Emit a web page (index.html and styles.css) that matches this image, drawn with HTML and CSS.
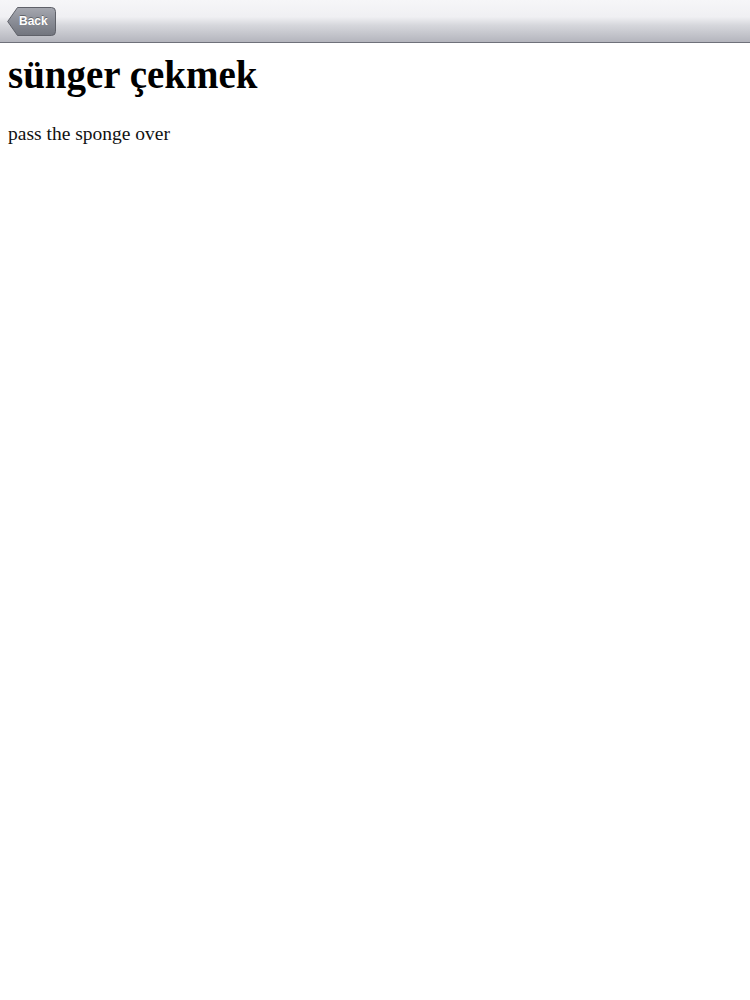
FILE: index.html
```html
<!DOCTYPE html>
<html>
<head>
<meta charset="utf-8">
<link rel="stylesheet" href="styles.css">
</head>
<body>
<div class="toolbar">
  <a class="back">
    <svg class="back-shape" width="49" height="29" viewBox="0 0 49 29">
      <defs>
        <linearGradient id="bg" x1="0" y1="0" x2="0" y2="1">
          <stop offset="0" stop-color="#a6a8b0"/>
          <stop offset="0.5" stop-color="#8a8d96"/>
          <stop offset="1" stop-color="#72757e"/>
        </linearGradient>
      </defs>
      <path d="M10.5 0.5 H44.5 A4 4 0 0 1 48.5 4.5 V24.5 A4 4 0 0 1 44.5 28.5 H10.5 L0.7 14.5 Z" fill="url(#bg)" stroke="#5f6169" stroke-width="1" stroke-linejoin="round"/>
    </svg>
    <span class="back-label">Back</span>
  </a>
</div>
<div class="content">
  <h1 class="title">sünger çekmek</h1>
  <p class="meaning">pass the sponge over</p>
</div>
</body>
</html>
```
FILE: styles.css
```css
html, body {
  margin: 0;
  padding: 0;
  background: #fff;
}
.toolbar {
  height: 42px;
  border-bottom: 1px solid #6f717a;
  background: linear-gradient(to bottom, #f6f6f8 0%, #f0f0f3 40%, #d6d7dc 60%, #b4b5bd 100%);
  display: flex;
  align-items: center;
  padding-left: 7px;
}
.back {
  position: relative;
  width: 49px;
  height: 29px;
  display: block;
}
.back-shape {
  display: block;
}
.back-label {
  position: absolute;
  left: 12px;
  top: 0;
  height: 29px;
  line-height: 29px;
  font-family: "Liberation Sans", Arial, sans-serif;
  font-weight: bold;
  font-size: 12px;
  color: #fff;
  text-shadow: 0 -1px 0 rgba(0,0,0,0.35);
}
.content {
  padding: 0 8px;
}
.title {
  font-family: "Liberation Serif", "Times New Roman", serif;
  font-weight: bold;
  font-size: 39px;
  margin: 12px 0 0 0;
  line-height: 40px;
  color: #000;
}
.meaning {
  font-family: "Liberation Serif", "Times New Roman", serif;
  font-size: 19.5px;
  margin: 28px 0 0 0;
  line-height: 22px;
  color: #111;
}
```
